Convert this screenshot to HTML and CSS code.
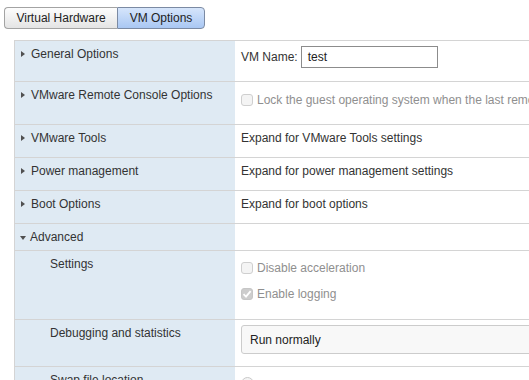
FILE: index.html
```html
<!DOCTYPE html>
<html>
<head>
<meta charset="utf-8">
<link rel="stylesheet" href="styles.css">
</head>
<body>
<div class="tabs">
  <div class="tab">Virtual Hardware</div>
  <div class="tab active">VM Options</div>
</div>
<div class="sheet">
  <div class="row h40">
    <div class="label"><span class="tri"></span>General Options</div>
    <div class="value pad5"><span class="text">VM Name:</span><span class="input">test</span></div>
  </div>
  <div class="row h42">
    <div class="label"><span class="tri"></span>VMware Remote Console Options</div>
    <div class="value pad11"><div class="check"><span class="box"></span><span class="dim">Lock the guest operating system when the last remote user disconnects</span></div></div>
  </div>
  <div class="row h32">
    <div class="label"><span class="tri"></span>VMware Tools</div>
    <div class="value pad6">Expand for VMware Tools settings</div>
  </div>
  <div class="row h32">
    <div class="label"><span class="tri"></span>Power management</div>
    <div class="value pad6">Expand for power management settings</div>
  </div>
  <div class="row h32">
    <div class="label"><span class="tri"></span>Boot Options</div>
    <div class="value pad6">Expand for boot options</div>
  </div>
  <div class="row h26">
    <div class="label"><span class="tri down"></span>Advanced</div>
    <div class="value"></div>
  </div>
  <div class="row h68">
    <div class="label sub">Settings</div>
    <div class="value pad10 stack">
      <div class="check"><span class="box"></span><span class="dim">Disable acceleration</span></div>
      <div class="check"><span class="box checked"><svg width="10" height="10" viewBox="0 0 10 10"><path d="M1.5 5.2 L4 7.6 L8.6 2.2" fill="none" stroke="#fff" stroke-width="1.8"/></svg></span><span class="dim">Enable logging</span></div>
    </div>
  </div>
  <div class="row h46">
    <div class="label sub">Debugging and statistics</div>
    <div class="value pad5"><div class="select">Run normally</div></div>
  </div>
  <div class="row h40">
    <div class="label sub">Swap file location</div>
    <div class="value pad10"><span class="radio"></span></div>
  </div>
</div>
</body>
</html>
```
FILE: styles.css
```css
html, body {
  margin: 0;
  padding: 0;
  overflow: hidden;
  background: #fff;
}
body {
  font-family: "Liberation Sans", Arial, sans-serif;
  font-size: 12px;
  color: #333;
  width: 529px;
  height: 380px;
}
.tabs {
  display: flex;
  margin: 7px 0 0 4px;
  height: 22px;
}
.tab {
  box-sizing: border-box;
  height: 22px;
  line-height: 20px;
  text-align: center;
  color: #222;
  width: 113px;
  border: 1px solid #a3a3a3;
  border-right: none;
  border-radius: 4px 0 0 4px;
  background: linear-gradient(#fdfdfd, #e4e4e4);
}
.tab.active {
  width: 88px;
  border: 1px solid #7b8aa3;
  border-radius: 0 4px 4px 0;
  background: linear-gradient(#d6e5fb, #a9c7f3);
}
.sheet {
  margin: 11px 0 0 14px;
  width: 700px;
  border-top: 1px solid #d4d4d4;
  border-left: 1px solid #d4d4d4;
}
.row {
  display: grid;
  grid-template-columns: 220px 1fr;
  border-bottom: 1px solid #d4d4d4;
  line-height: 15px;
}
.h40 { height: 40px; }
.h42 { height: 42px; }
.h32 { height: 32px; }
.h26 { height: 26px; }
.h68 { height: 68px; }
.h46 { height: 46px; }
.label {
  background: #dfeaf3;
  padding: 6px 0 0 6px;
  display: flex;
  align-items: flex-start;
  white-space: nowrap;
}
.label.sub {
  padding-left: 35px;
}
.tri {
  width: 0;
  height: 0;
  border-left: 4px solid #505050;
  border-top: 3.5px solid transparent;
  border-bottom: 3.5px solid transparent;
  margin: 4px 6px 0 0;
}
.tri.down {
  border-left: 3.5px solid transparent;
  border-right: 3.5px solid transparent;
  border-top: 4px solid #505050;
  border-bottom: none;
  margin: 6px 4px 0 -1px;
}
.value {
  padding-left: 6px;
  white-space: nowrap;
  overflow: hidden;
}
.pad5 { padding-top: 5px; display: flex; align-items: center; align-self: start; }
.pad6 { padding-top: 6px; }
.pad10 { padding-top: 10px; }
.pad11 { padding-top: 11px; }
.stack {
  display: flex;
  flex-direction: column;
  gap: 12px;
}
.text { margin-right: 3px; }
.input {
  box-sizing: border-box;
  width: 137px;
  height: 22px;
  border: 1px solid #8c8c8c;
  padding-left: 6px;
  line-height: 20px;
  color: #222;
}
.check {
  display: flex;
  align-items: center;
  height: 14px;
}
.box {
  box-sizing: border-box;
  width: 12px;
  height: 12px;
  border: 1px solid #cfcfcf;
  border-radius: 3px;
  background: #f4f4f4;
  margin-right: 4px;
  display: flex;
  align-items: center;
  justify-content: center;
}
.box.checked {
  background: #cdcdcd;
  border-color: #c6c6c6;
}
.dim {
  color: #8f8f8f;
}
.select {
  box-sizing: border-box;
  width: 320px;
  height: 29px;
  border: 1px solid #cccccc;
  border-radius: 3px;
  background: #f8f8f8;
  line-height: 28px;
  padding-left: 8px;
  color: #222;
}
.radio {
  display: inline-block;
  width: 11px;
  height: 11px;
  border: 1px solid #c8c8c8;
  border-radius: 50%;
  background: #f4f4f4;
}
```
